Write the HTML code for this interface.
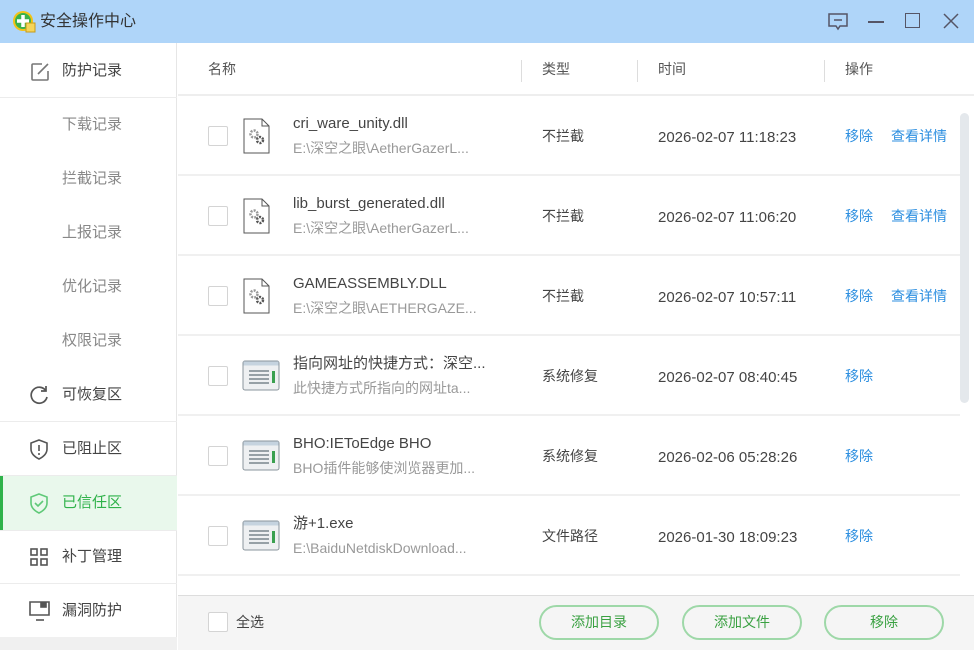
<!DOCTYPE html>
<html><head><meta charset="utf-8"><style>
*{margin:0;padding:0;box-sizing:border-box}
body{width:974px;height:650px;overflow:hidden;background:#fff;font-family:"Liberation Sans","Noto Sans CJK SC",sans-serif;position:relative;color:#333}
.a{position:absolute}
.title{left:0;top:0;width:974px;height:43px;background:#afd5f9}
.side{left:0;top:43px;width:177px;height:607px;background:#fff;border-right:1px solid #e6e6e6}
.si{position:absolute;left:0;width:177px;height:54px;font-size:15px;color:#444;line-height:54px}
.sub{color:#888;padding-left:62px}
.main{padding-left:62px}
.sep{position:absolute;left:0;width:177px;height:1px;background:#ececec}
.hd{font-size:14px;color:#555;top:59px;line-height:20px}
.row{position:absolute;left:178px;width:782px;height:80px;border-bottom:2px solid #f0f0f0}
.row div{line-height:20px}
.cb{position:absolute;left:30px;top:30px;width:20px;height:20px;border:1px solid #d4d4d4;border-radius:2px;background:#fff}
.nm{position:absolute;left:115px;top:18px;font-size:15px;color:#444;white-space:nowrap}
.pt{position:absolute;left:115px;top:42px;font-size:14px;color:#999;white-space:nowrap}
.ty{position:absolute;left:364px;top:30px;font-size:14px;color:#444}
.tm{position:absolute;left:480px;top:32px;font-size:15px;color:#444}
.op{position:absolute;left:667px;top:30px;font-size:14px;color:#2d8fe0}
.op2{position:absolute;left:713px;top:30px;font-size:14px;color:#2d8fe0}
.ic{position:absolute;left:65px;top:22px}
.btn{position:absolute;top:605px;width:120px;height:35px;border:2px solid #9ed8a8;border-radius:18px;text-align:center;line-height:31px;font-size:14px;color:#3aa142;background:#f5f5f5}
</style></head><body>
<div class="a title">
<svg class="a" style="left:12px;top:10px" width="24" height="24" viewBox="0 0 24 24"><circle cx="11" cy="11" r="10" fill="#f3c316"/><circle cx="11" cy="11" r="8" fill="#3bb24a"/><path d="M11 5v12M5 11h12" stroke="#fff" stroke-width="3.5"/><rect x="14" y="13" width="9" height="9" fill="#f6d55a" stroke="#c59c1a"/></svg>
<div class="a" style="left:40px;top:12px;font-size:16px;line-height:20px;color:#333">安全操作中心</div>
<svg class="a" style="left:828px;top:12px" width="20" height="20" viewBox="0 0 20 20" fill="none" stroke="#556" stroke-width="1.5"><path d="M1 2h18v12H12l-2 3-2-3H1z"/><path d="M6 8h8"/></svg>
<div class="a" style="left:868px;top:21px;width:16px;height:1.5px;background:#556"></div>
<div class="a" style="left:905px;top:13px;width:15px;height:15px;border:1.6px solid #556"></div>
<svg class="a" style="left:943px;top:13px" width="16" height="16" viewBox="0 0 16 16" stroke="#556" stroke-width="1.5"><path d="M1 1l14 14M15 1L1 15"/></svg>
</div>
<div class="a side">
<div class="si main" style="top:1px">防护记录</div>
<svg class="a" style="left:30px;top:19px" width="20" height="20" viewBox="0 0 20 20" fill="none" stroke="#777" stroke-width="1.6"><path d="M12 2H3a1 1 0 0 0-1 1v14a1 1 0 0 0 1 1h14a1 1 0 0 0 1-1V9"/><path d="M8 12l10-10"/></svg>
<div class="sep" style="top:54px"></div>
<div class="si sub" style="top:55px">下载记录</div>
<div class="si sub" style="top:109px">拦截记录</div>
<div class="si sub" style="top:163px">上报记录</div>
<div class="si sub" style="top:217px">优化记录</div>
<div class="si sub" style="top:271px">权限记录</div>
<div class="si main" style="top:325px">可恢复区</div>
<svg class="a" style="left:29px;top:342px" width="20" height="20" viewBox="0 0 20 20" fill="none" stroke="#555" stroke-width="1.7"><path d="M17 6A8 8 0 1 0 18 12"/><path d="M17 1v5h-5"/></svg>
<div class="sep" style="top:378px"></div>
<div class="si main" style="top:379px">已阻止区</div>
<svg class="a" style="left:29px;top:396px" width="20" height="21" viewBox="0 0 20 21" fill="none" stroke="#555" stroke-width="1.6"><path d="M10 1l8 3v6c0 5-4 8-8 10C6 18 2 15 2 10V4z"/><path d="M10 6v6M10 14v2"/></svg>
<div class="sep" style="top:432px"></div>
<div class="si main" style="top:433px;background:#e9f8ec;color:#2fb24a">已信任区</div>
<div class="a" style="left:0;top:433px;width:3px;height:54px;background:#2fb24a"></div>
<svg class="a" style="left:29px;top:450px" width="20" height="21" viewBox="0 0 20 21" fill="none" stroke="#5fc978" stroke-width="1.6"><path d="M10 1l8 3v6c0 5-4 8-8 10C6 18 2 15 2 10V4z"/><path d="M6 10l3 3 5-5"/></svg>
<div class="sep" style="top:487px"></div>
<div class="si main" style="top:487px">补丁管理</div>
<svg class="a" style="left:30px;top:505px" width="18" height="18" viewBox="0 0 18 18" fill="none" stroke="#555" stroke-width="1.6"><rect x="1" y="1" width="6" height="6"/><rect x="11" y="1" width="6" height="6"/><rect x="1" y="11" width="6" height="6"/><rect x="11" y="11" width="6" height="6"/></svg>
<div class="sep" style="top:540px"></div>
<div class="si main" style="top:541px">漏洞防护</div>
<svg class="a" style="left:29px;top:558px" width="21" height="20" viewBox="0 0 21 20" fill="none" stroke="#555" stroke-width="1.6"><path d="M1 1h19v13H1z"/><path d="M7 19h8"/><rect x="12" y="2" width="5" height="4" fill="#555"/></svg>
<div class="a" style="left:0;top:594px;width:177px;height:13px;background:#f0f0f0"></div>
</div>
<div class="a" style="left:178px;top:43px;width:796px;height:53px;border-bottom:2px solid #eee"></div>
<div class="a hd" style="left:208px">名称</div>
<div class="a" style="left:521px;top:60px;width:1px;height:22px;background:#ddd"></div>
<div class="a hd" style="left:542px">类型</div>
<div class="a" style="left:637px;top:60px;width:1px;height:22px;background:#ddd"></div>
<div class="a hd" style="left:658px">时间</div>
<div class="a" style="left:824px;top:60px;width:1px;height:22px;background:#ddd"></div>
<div class="a hd" style="left:845px">操作</div>
<div class="a" style="left:960px;top:113px;width:9px;height:290px;background:#e4e8ec;border-radius:5px"></div>

<svg width="0" height="0" style="position:absolute"><defs>
<g id="dll"><path d="M1 1h18l7 7v27H1z" fill="#fff" stroke="#555" stroke-width="1"/><path d="M19 1v7h7" fill="none" stroke="#555"/><circle cx="11" cy="16" r="3.5" fill="none" stroke="#999" stroke-width="2.5" stroke-dasharray="2 1.2"/><circle cx="17" cy="22" r="3" fill="none" stroke="#555" stroke-width="2.5" stroke-dasharray="2 1.2"/></g>
<g id="win"><rect x="1" y="1" width="36" height="29" rx="2" fill="#eef0f2" stroke="#8a949c"/><rect x="1.5" y="1.5" width="35" height="4" fill="#c5d3df"/><path d="M7 11h20M7 15h20M7 19h20M7 23h20" stroke="#8a949c" stroke-width="1.8"/><rect x="30" y="11" width="3" height="12" fill="#3aa050"/></g>
</defs></svg>

<div class="row" style="top:96px"><div class="cb"></div><svg class="ic" width="30" height="36"><use href="#dll"/></svg><div class="nm">cri_ware_unity.dll</div><div class="pt">E:\深空之眼\AetherGazerL...</div><div class="ty">不拦截</div><div class="tm">2026-02-07 11:18:23</div><div class="op">移除</div><div class="op2">查看详情</div></div>
<div class="row" style="top:176px"><div class="cb"></div><svg class="ic" width="30" height="36"><use href="#dll"/></svg><div class="nm">lib_burst_generated.dll</div><div class="pt">E:\深空之眼\AetherGazerL...</div><div class="ty">不拦截</div><div class="tm">2026-02-07 11:06:20</div><div class="op">移除</div><div class="op2">查看详情</div></div>
<div class="row" style="top:256px"><div class="cb"></div><svg class="ic" width="30" height="36"><use href="#dll"/></svg><div class="nm">GAMEASSEMBLY.DLL</div><div class="pt">E:\深空之眼\AETHERGAZE...</div><div class="ty">不拦截</div><div class="tm">2026-02-07 10:57:11</div><div class="op">移除</div><div class="op2">查看详情</div></div>
<div class="row" style="top:336px"><div class="cb"></div><svg class="ic" style="left:64px;top:24px" width="38" height="32"><use href="#win"/></svg><div class="nm">指向网址的快捷方式：深空...</div><div class="pt">此快捷方式所指向的网址ta...</div><div class="ty">系统修复</div><div class="tm">2026-02-07 08:40:45</div><div class="op">移除</div></div>
<div class="row" style="top:416px"><div class="cb"></div><svg class="ic" style="left:64px;top:24px" width="38" height="32"><use href="#win"/></svg><div class="nm">BHO:IEToEdge BHO</div><div class="pt">BHO插件能够使浏览器更加...</div><div class="ty">系统修复</div><div class="tm">2026-02-06 05:28:26</div><div class="op">移除</div></div>
<div class="row" style="top:496px"><div class="cb"></div><svg class="ic" style="left:64px;top:24px" width="38" height="32"><use href="#win"/></svg><div class="nm">游+1.exe</div><div class="pt">E:\BaiduNetdiskDownload...</div><div class="ty">文件路径</div><div class="tm">2026-01-30 18:09:23</div><div class="op">移除</div></div>

<div class="a" style="left:178px;top:595px;width:796px;height:55px;background:#f5f5f5;border-top:1px solid #ddd"></div>
<div class="a" style="left:208px;top:612px;width:20px;height:20px;border:1px solid #d4d4d4;border-radius:2px;background:#fff"></div>
<div class="a" style="left:236px;top:612px;font-size:14px;line-height:20px;color:#444">全选</div>
<div class="btn" style="left:539px">添加目录</div>
<div class="btn" style="left:682px">添加文件</div>
<div class="btn" style="left:824px">移除</div>
</body></html>
